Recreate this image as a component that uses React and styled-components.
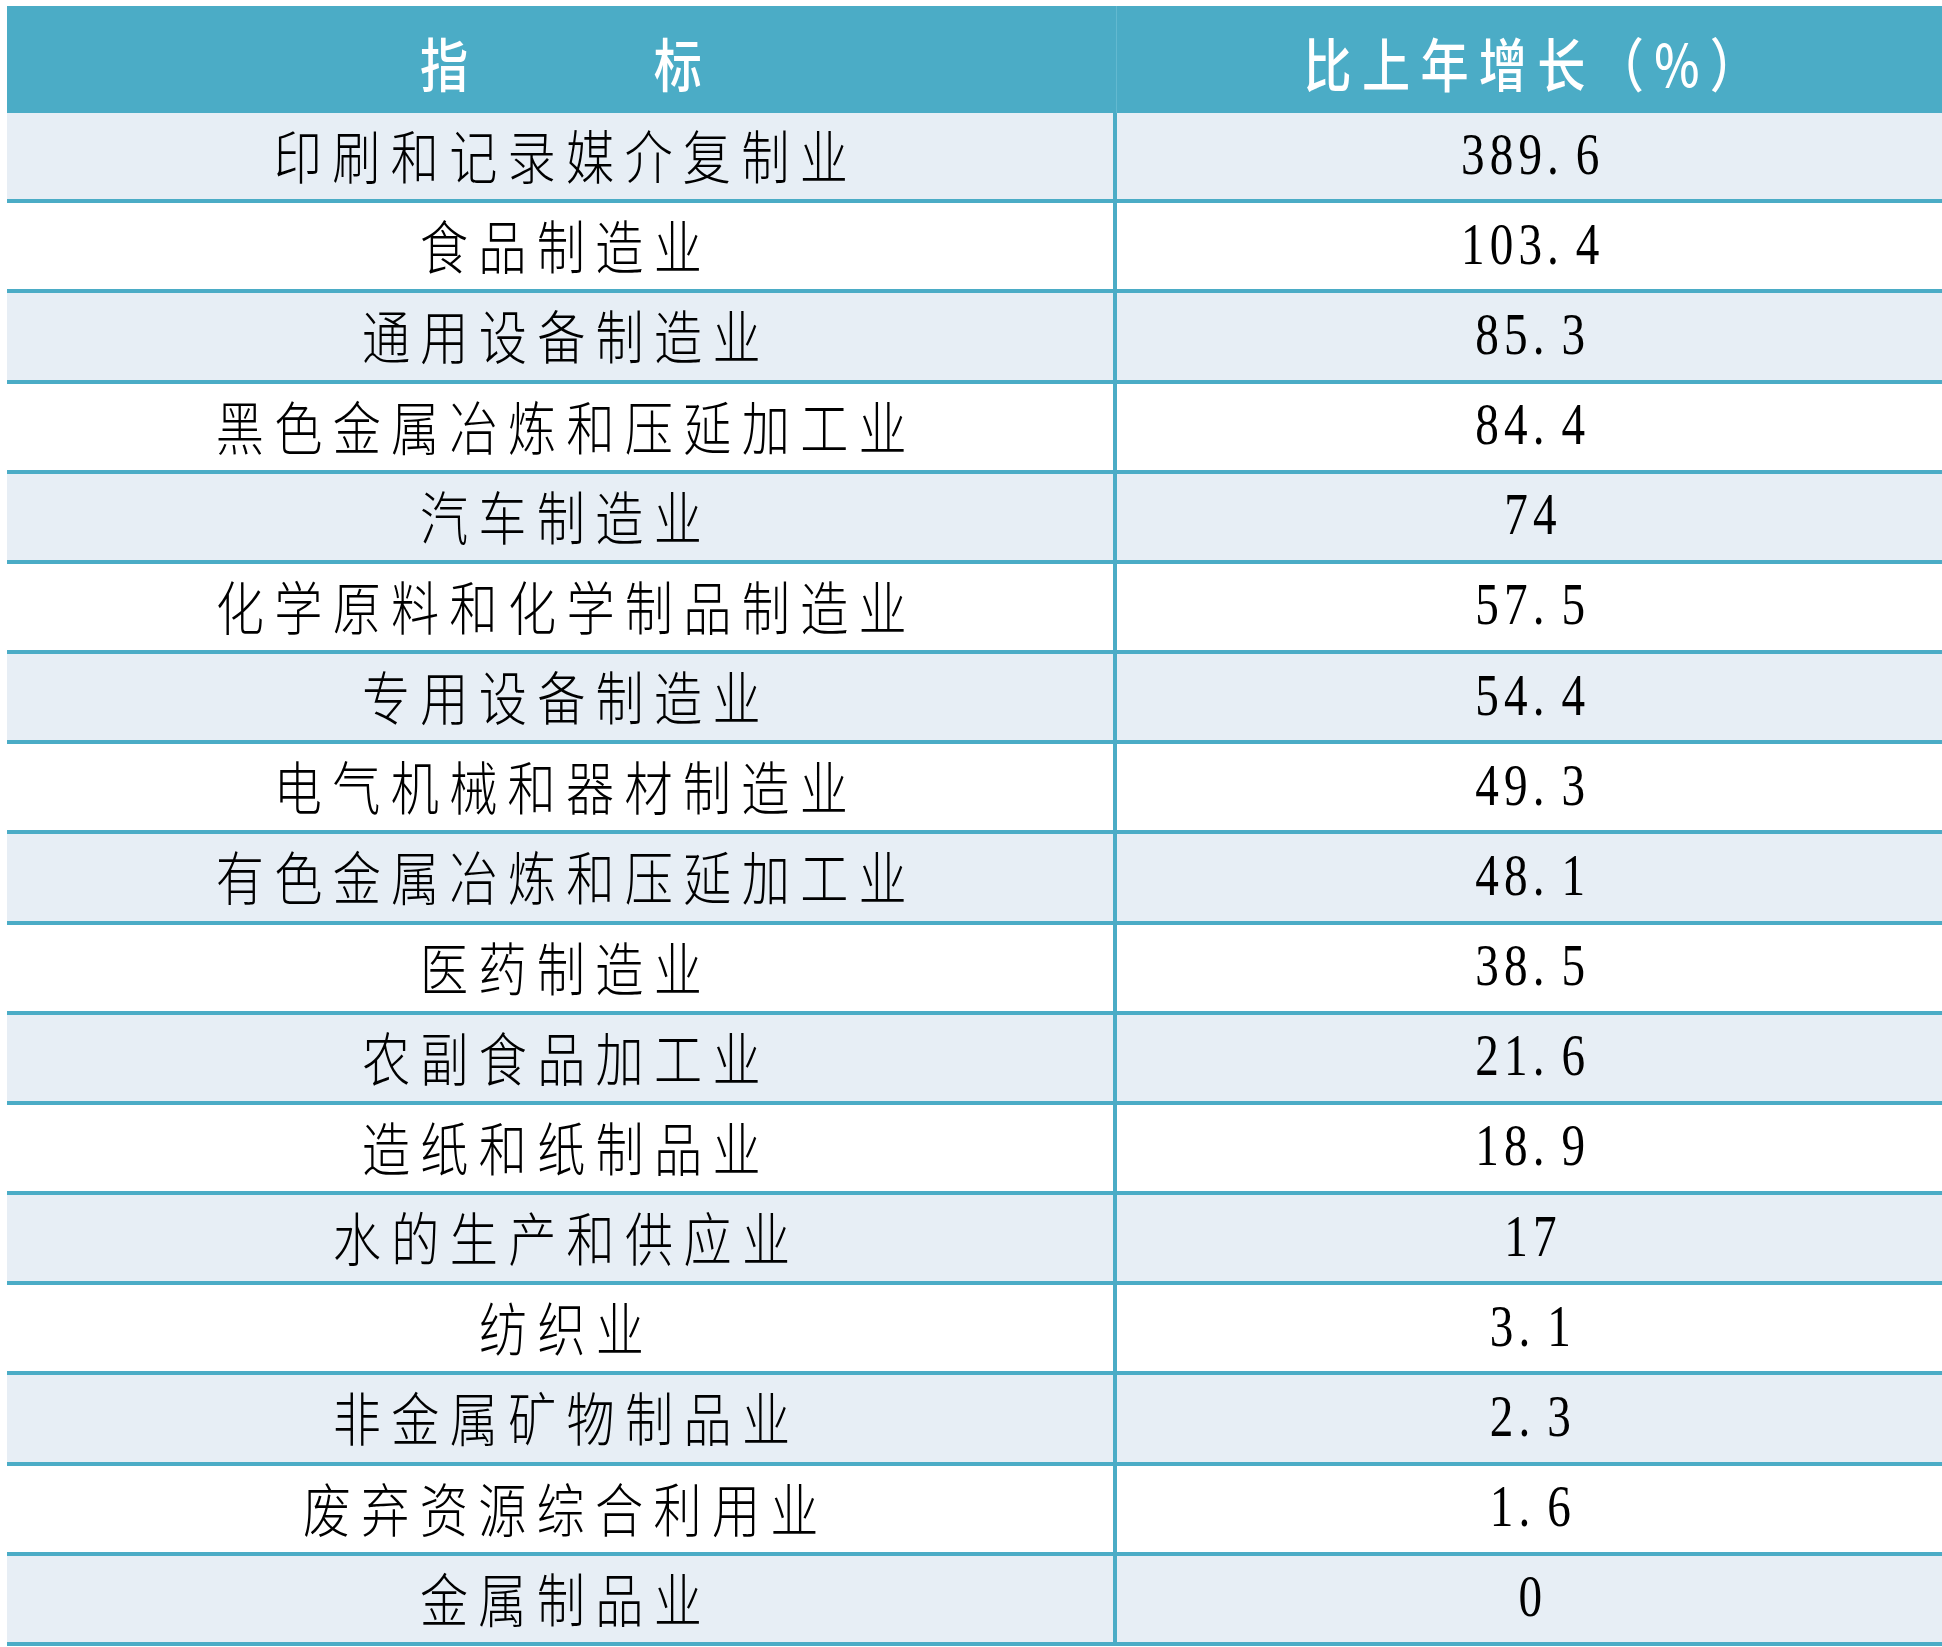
import React from 'react';
import styled, { createGlobalStyle } from 'styled-components';

const GlobalStyle = createGlobalStyle`
  html, body {
    margin: 0;
    padding: 0;
    background: #ffffff;
  }
`;

const Page = styled.div`
  width: 1942px;
  box-sizing: border-box;
  padding: 6px 0 0 7px;
`;

const Table = styled.div`
  display: flex;
  flex-direction: column;
`;

const Row = styled.div`
  display: grid;
  grid-template-columns: 1106px 1fr;
  height: ${p => (p.$head ? '107px' : '90.18px')};
  box-sizing: border-box;
  background: ${p => (p.$head ? '#4bacc6' : p.$shade ? '#e7eef5' : '#ffffff')};
  border-bottom: ${p => (p.$head ? 'none' : '4px solid #4bacc6')};
`;

const Cell = styled.div`
  display: flex;
  align-items: center;
  justify-content: center;
  overflow: hidden;
`;

const ValueCell = styled(Cell)`
  border-left: ${p => (p.$head ? '1px solid #63b9d0' : '4px solid #4bacc6')};
  margin-left: ${p => (p.$head ? '3px' : '0')};
`;

const Label = styled.span`
  display: inline-block;
  font-family: "Noto Sans CJK SC", "Noto Sans", sans-serif;
  font-size: 58px;
  font-weight: ${p => (p.$head ? 500 : 300)};
  letter-spacing: 12.4px;
  margin-right: -12.4px;
  line-height: 1;
  color: ${p => (p.$head ? '#ffffff' : '#000000')};
  transform: ${p => (p.$head ? 'translateY(2px)' : 'translateY(-2px)')} scaleX(0.83);
  white-space: pre;
`;

const Num = styled.span`
  display: inline-block;
  font-family: "Liberation Serif", "Times New Roman", serif;
  font-size: 59px;
  letter-spacing: 6.4px;
  margin-right: -6.4px;
  line-height: 1;
  color: #000000;
  transform: translateY(-2px) scaleX(0.8);
`;

const Dot = styled.span`
  margin-right: 14.7px;
`;

const rows = [
  ['印刷和记录媒介复制业', '389.6'],
  ['食品制造业', '103.4'],
  ['通用设备制造业', '85.3'],
  ['黑色金属冶炼和压延加工业', '84.4'],
  ['汽车制造业', '74'],
  ['化学原料和化学制品制造业', '57.5'],
  ['专用设备制造业', '54.4'],
  ['电气机械和器材制造业', '49.3'],
  ['有色金属冶炼和压延加工业', '48.1'],
  ['医药制造业', '38.5'],
  ['农副食品加工业', '21.6'],
  ['造纸和纸制品业', '18.9'],
  ['水的生产和供应业', '17'],
  ['纺织业', '3.1'],
  ['非金属矿物制品业', '2.3'],
  ['废弃资源综合利用业', '1.6'],
  ['金属制品业', '0'],
];

const Value = ({ text }) => {
  const [whole, frac] = text.split('.');
  return (
    <Num>
      {whole}
      {frac !== undefined && (
        <>
          <Dot>.</Dot>
          {frac}
        </>
      )}
    </Num>
  );
};

export default function App() {
  return (
    <Page>
      <GlobalStyle />
      <Table>
        <Row $head>
          <Cell>
            <Label $head>{'指　　　标'}</Label>
          </Cell>
          <ValueCell $head>
            <Label $head>比上年增长（%）</Label>
          </ValueCell>
        </Row>
        {rows.map(([name, value], i) => (
          <Row key={name} $shade={i % 2 === 0}>
            <Cell>
              <Label>{name}</Label>
            </Cell>
            <ValueCell>
              <Value text={value} />
            </ValueCell>
          </Row>
        ))}
      </Table>
    </Page>
  );
}
